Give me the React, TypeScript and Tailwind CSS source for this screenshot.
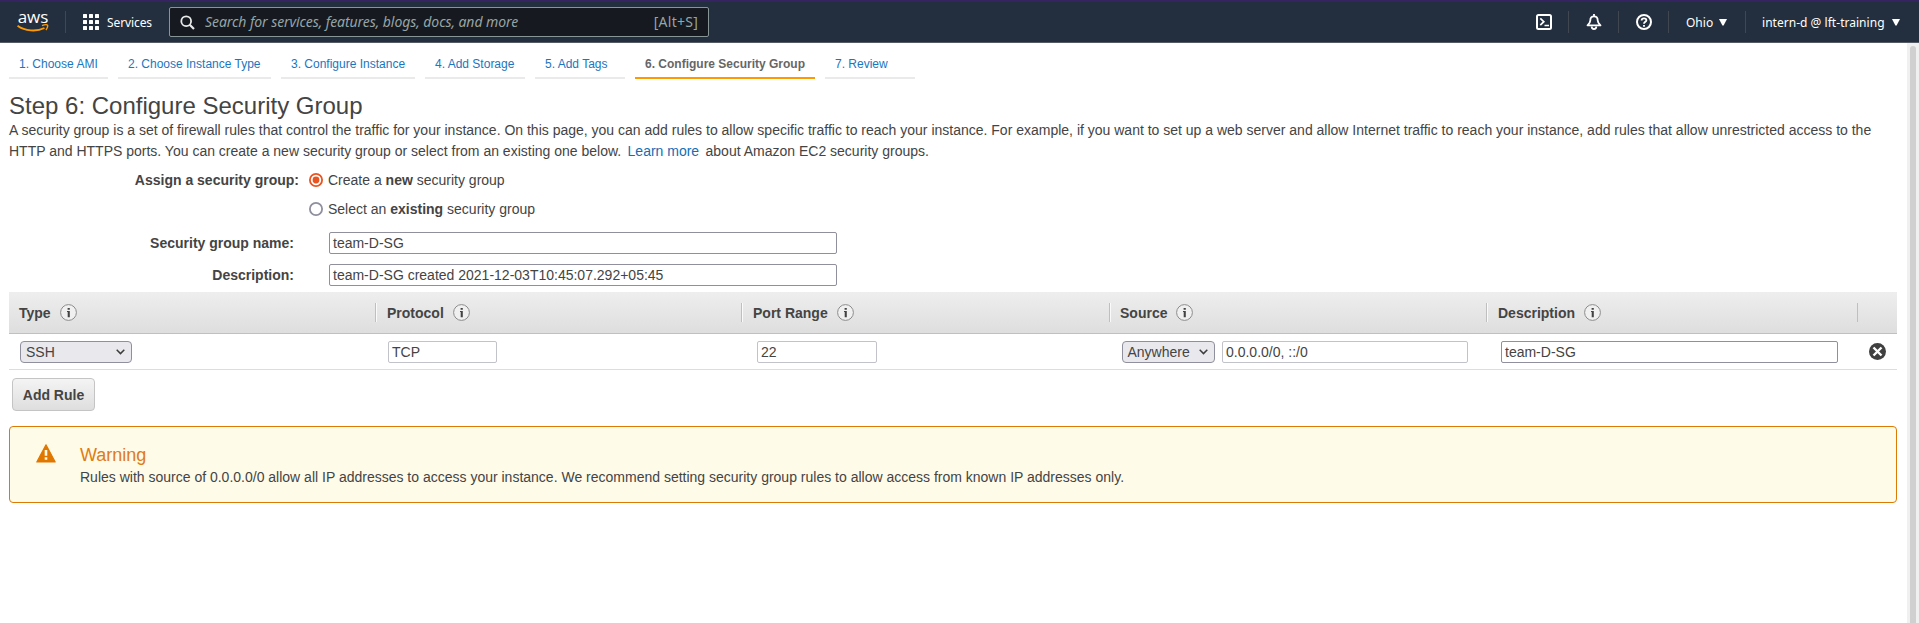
import React from "react";

const INFO_COLUMNS = [
  { label: "Type", width: "w-[367px]", inner: "pl-[10px]" },
  { label: "Protocol", width: "w-[366px]", inner: "border-l border-white/80 pl-[10px]" },
  { label: "Port Range", width: "w-[368px]", inner: "border-l border-white/80 pl-[10px]" },
  { label: "Source", width: "w-[377px]", inner: "border-l border-white/80 pl-[9px]" },
  { label: "Description", width: "w-[371px]", inner: "border-l border-white/80 pl-[10px]" },
];

const STEPS = [
  { label: "1. Choose AMI", width: "w-[99px]" },
  { label: "2. Choose Instance Type", width: "w-[153px]" },
  { label: "3. Configure Instance", width: "w-[134px]" },
  { label: "4. Add Storage", width: "w-[100px]" },
  { label: "5. Add Tags", width: "w-[90px]" },
  { label: "6. Configure Security Group", width: "w-[180px]", active: true },
  { label: "7. Review", width: "w-[90px]" },
];

function AwsLogo() {
  return (
    <div className="flex h-[22px] w-[32px] flex-col items-center">
      <span className="h-[13px] font-['Open_Sans',sans-serif] text-[17px] leading-[11px] font-medium text-white">aws</span>
      <svg width="32" height="9" viewBox="0 0 32 9" fill="none" className="shrink-0">
        <path d="M0.5 1.700C8 7.200 19.500 8 27.500 4" stroke="#ff9900" strokeWidth="1.900" />
        <path d="M25 1.700C27.500 0.700 29.900 0.500 30.500 1.200C31 2 30.200 4.600 28.900 6" stroke="#ff9900" strokeWidth="1.400" />
      </svg>
    </div>
  );
}

function NavDivider() {
  return <div className="h-[22px] w-px shrink-0 bg-[#414750]" />;
}

function Caret() {
  return (
    <svg width="8" height="7" viewBox="0 0 8 7" fill="#fff">
      <path d="M0 0H8L4.600 6.600H3.400Z" />
    </svg>
  );
}

function TopNav() {
  return (
    <header className="flex h-[43px] shrink-0 items-center border-t-2 border-b border-t-[#35245f] border-b-[#545b64] bg-[#232f3e] font-['Noto_Sans',sans-serif] text-white">
      <div className="flex items-center pl-[17px]">
        <AwsLogo />
      </div>
      <div className="ml-4 flex">
        <NavDivider />
      </div>
      <svg width="16" height="16" viewBox="0 0 16 16" fill="#fff" className="ml-[17px]">
        {[0, 6, 12].map((y) => [0, 6, 12].map((x) => <rect key={`${x}-${y}`} x={x} y={y} width="4" height="4" rx="0.5" />))}
      </svg>
      <span className="ml-2 w-[62px] pt-0.5 text-[12px] leading-4 tracking-[-0.1px]">Services</span>
      <div className="flex h-[30px] w-[540px] items-center rounded-[2px] border border-[#879596] bg-[#16191f] pr-[10px] pl-[10px] text-[#95a5a6]">
        <svg width="15" height="15" viewBox="0 0 15 15" fill="none" stroke="#e8eaea" strokeWidth="1.800">
          <circle cx="6.200" cy="6.200" r="4.900" />
          <path d="M9.700 9.700L14 14" strokeWidth="2.200" />
        </svg>
        <span className="ml-[10px] text-[14px] leading-5 tracking-[-0.07px] italic">Search for services, features, blogs, docs, and more</span>
        <span className="ml-auto text-[14px] leading-5 tracking-[0.25px]">[Alt+S]</span>
      </div>
      <div className="ml-auto flex items-center">
        <svg width="16" height="16" viewBox="0 0 16 16" fill="none" stroke="#fff" strokeWidth="2">
          <rect x="1" y="1" width="14" height="14" rx="1.500" />
          <path d="M4.300 4.300L7.800 7.700L4.300 11.100M8.500 11.500H13" strokeWidth="1.700" />
        </svg>
        <div className="ml-4 flex"><NavDivider /></div>
        <svg width="16" height="16" viewBox="0 0 16 16" fill="none" stroke="#fff" strokeWidth="1.800" className="ml-[17px]">
          <path d="M8 0V2M1.500 11.300C3.500 9.500 4.300 8.500 4.300 6.500C4.300 3.700 6 2.300 8 2.300S11.700 3.700 11.700 6.500C11.700 8.500 12.500 9.500 14.500 11.300Z" strokeLinejoin="round" />
          <path d="M5.700 12.500C5.700 15.800 10.300 15.800 10.300 12.500" />
        </svg>
        <div className="ml-4 flex"><NavDivider /></div>
        <svg width="16" height="16" viewBox="0 0 16 16" fill="none" stroke="#fff" strokeWidth="2" className="ml-[17px]">
          <circle cx="8" cy="8" r="7" />
          <path d="M5.600 6.500C5.600 3.500 10.400 3.700 10.400 6.300C10.400 7.800 8 7.900 8 9.800M8 11V12.800" strokeWidth="1.800" />
        </svg>
        <div className="ml-4 flex"><NavDivider /></div>
        <span className="ml-[17px] w-[33px] pt-0.5 text-[12px] leading-4">Ohio</span>
        <Caret />
        <div className="ml-[18px] flex"><NavDivider /></div>
        <span className="ml-4 w-[130px] pt-0.5 text-[12px] leading-4 tracking-[0.03px] whitespace-nowrap">intern-d @ lft-training</span>
        <Caret />
        <div className="w-[19px]" />
      </div>
    </header>
  );
}

function StepTabs() {
  return (
    <nav className="flex h-[36px] gap-[10px] text-[12px]">
      {STEPS.map((s) => (
        <a
          key={s.label}
          className={`${s.width} shrink-0 border-b-2 pt-[12px] pl-[10px] leading-[18px] whitespace-nowrap ${
            s.active ? "border-[#f90] font-bold text-[#666]" : "border-[#eaeaea] text-[#1a76c0]"
          }`}
        >
          {s.label}
        </a>
      ))}
    </nav>
  );
}

function InfoIcon() {
  return (
    <svg width="17" height="17" viewBox="0 0 17 17" fill="none">
      <circle cx="8.500" cy="8.500" r="7.900" fill="#f0f0f0" stroke="#8c8c8c" />
      <path d="M7.600 4H9.800V5.700H7.600ZM7 7H9.800V13.300H7.700V8H7Z" fill="#444" />
    </svg>
  );
}

function Radio({ checked = false }: { checked?: boolean }) {
  return (
    <svg width="14" height="14" viewBox="0 0 14 14" fill="none">
      <circle cx="7" cy="7" r="6.100" stroke={checked ? "#e95420" : "#8f8f9d"} strokeWidth="1.800" />
      {checked && <circle cx="7" cy="7" r="3.400" fill="#e95420" />}
    </svg>
  );
}

function Field({ value, className }: { value: string; className: string }) {
  return (
    <div className={`flex h-[22px] shrink-0 items-center rounded-[2px] border bg-white pl-[3px] leading-5 ${className}`}>
      {value}
    </div>
  );
}

function Select({ value, className }: { value: string; className: string }) {
  return (
    <div className={`flex h-[22px] shrink-0 items-center justify-between rounded-[4px] border border-[#8f8f9d] bg-[#e9e9ed] pr-[6px] leading-5 ${className}`}>
      {value}
      <svg width="9" height="6" viewBox="0 0 9 6" fill="none" stroke="#3c3c3c" strokeWidth="1.500">
        <path d="M0.700 0.800L4.500 4.600L8.300 0.800" />
      </svg>
    </div>
  );
}

function RulesTable() {
  return (
    <section>
      <div className="flex h-[42px] items-center border-b border-[#c0c0c0] bg-linear-to-b from-[#eee] to-[#dedede]">
        {INFO_COLUMNS.map((c) => (
          <div key={c.label} className={`${c.width} flex h-[19px] shrink-0 items-center border-r border-[#bfbfbf] font-bold`}>
            <div className={`${c.inner} flex h-[19px] w-full items-center gap-[9px]`}>
              <span className="pt-[2px] leading-[19px]">{c.label}</span>
              <InfoIcon />
            </div>
          </div>
        ))}
      </div>
      <div className="flex h-[36px] items-center border-b border-[#ddd]">
        <div className="flex w-[368px] shrink-0 pl-[11px]">
          <Select value="SSH" className="w-[112px] pl-[5px]" />
        </div>
        <div className="flex w-[369px] shrink-0 pl-[11px]">
          <Field value="TCP" className="w-[109px] border-[#c2c2ca]" />
        </div>
        <div className="flex w-[365px] shrink-0 pl-[11px]">
          <Field value="22" className="w-[120px] border-[#c2c2ca]" />
        </div>
        <div className="flex w-[379px] shrink-0 gap-[7px] pl-[11px]">
          <Select value="Anywhere" className="w-[93px] pl-[4.5px]" />
          <Field value="0.0.0.0/0, ::/0" className="w-[246px] border-[#c2c2ca]" />
        </div>
        <div className="flex w-[377px] shrink-0 pl-[11px]">
          <Field value="team-D-SG" className="w-[337px] border-[#8f8f9d]" />
        </div>
        <svg width="17" height="17" viewBox="0 0 17 17" className="ml-[2px]">
          <circle cx="8.500" cy="8.500" r="8.500" fill="#404040" />
          <path d="M4.500 4.500L12.500 12.500M12.500 4.500L4.500 12.500" stroke="#fff" strokeWidth="2.400" />
        </svg>
      </div>
    </section>
  );
}

export default function App() {
  return (
    <div className="flex h-[623px] w-full flex-col overflow-hidden bg-white font-['Liberation_Sans',Arial,sans-serif] text-[14px] leading-[21px] text-[#444]">
      <TopNav />
      <div className="flex min-h-0 flex-1">
        <main className="min-w-0 flex-1 pr-[10px] pl-[9px]">
          <StepTabs />
          <h1 className="mt-[12px] h-[29px] text-[24px] leading-[29px]">Step 6: Configure Security Group</h1>
          <p className="h-[42px]">
            A security group is a set of firewall rules that control the traffic for your instance. On this page, you can add rules to allow specific
            traffic to reach your instance. For example, if you want to set up a web server and allow Internet traffic to reach your instance, add rules
            that allow unrestricted access to the HTTP and HTTPS ports. You can create a new security group or select from an existing one below.{" "}
            <a className="mx-[2.5px] text-[#146eb4]">Learn more</a> about Amazon EC2 security groups.
          </p>
          <div className="mt-2 flex h-[21px] items-center">
            <b className="w-[290px] text-right">Assign a security group:</b>
            <span className="mr-[5px] mb-px ml-[10px] flex"><Radio checked /></span>
            <span>Create a <b>new</b> security group</span>
          </div>
          <div className="mt-2 flex h-[21px] items-center">
            <span className="mr-[5px] mb-px ml-[300px] flex"><Radio /></span>
            <span>Select an <b>existing</b> security group</span>
          </div>
          <div className="mt-[12px] flex h-[22px] items-center">
            <b className="mr-[35px] w-[285px] text-right">Security group name:</b>
            <Field value="team-D-SG" className="w-[508px] border-[#8f8f9d]" />
          </div>
          <div className="mt-[10px] mb-[6px] flex h-[22px] items-center">
            <b className="mr-[35px] w-[285px] text-right">Description:</b>
            <Field value="team-D-SG created 2021-12-03T10:45:07.292+05:45" className="w-[508px] border-[#8f8f9d]" />
          </div>
          <RulesTable />
          <button className="mt-2 ml-[3px] flex h-[33px] w-[83px] items-center justify-center rounded-[4px] border border-[#c4c4c4] bg-linear-to-b from-[#f4f4f4] to-[#dedede] pt-[2px] font-bold">
            Add Rule
          </button>
          <div className="mt-[15px] flex h-[77px] rounded-[4px] border border-[#dd7a05] bg-[#fffbe9]">
            <svg width="20" height="19" viewBox="0 0 20 19" className="mt-[17px] ml-[26px] shrink-0">
              <path d="M10 0.800L19.200 18H0.800Z" fill="#e07700" stroke="#e07700" strokeWidth="1.200" strokeLinejoin="round" />
              <path d="M8.700 6H11.300V11.700H8.700ZM8.700 13.200H11.300V15.700H8.700Z" fill="#fffbe9" />
            </svg>
            <div className="ml-6 pt-[16px]">
              <h2 className="h-[24px] text-[18px] leading-[24px] text-[#e07c11]">Warning</h2>
              <p>Rules with source of 0.0.0.0/0 allow all IP addresses to access your instance. We recommend setting security group rules to allow access from known IP addresses only.</p>
            </div>
          </div>
        </main>
        <div className="w-[12px] shrink-0 bg-[#f0f0f0] pt-[3px] pl-[3px]">
          <div className="h-full w-[6px] rounded-t-[3px] bg-[#d0d0d0]" />
        </div>
      </div>
    </div>
  );
}
